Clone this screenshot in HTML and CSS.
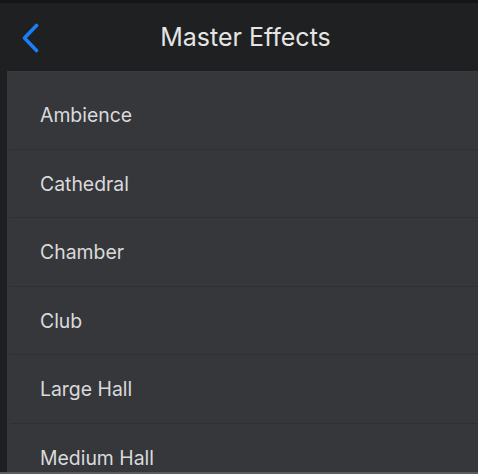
FILE: index.html
```html
<!DOCTYPE html>
<html lang="en">
<head>
    <meta charset="UTF-8">
    <meta name="viewport" content="width=device-width, initial-scale=1.0">
    <title>Master Effects</title>
    <link rel="stylesheet" href="styles.css">
</head>
<body>
    <div class="screen">
        <div class="nav-bar">
            <button class="back-btn" aria-label="Back">
                <svg width="20" height="30" viewBox="0 0 20 30">
                    <path d="M16.5 2.5 L4.5 15 L16.5 27.5" fill="none" stroke="#1b7ef6" stroke-width="3.6" stroke-linecap="round" stroke-linejoin="round"/>
                </svg>
            </button>
            <div class="nav-title">Master Effects</div>
        </div>
        <div class="content">
            <ul class="effect-list">
                <li class="effect-row">Ambience</li>
                <li class="effect-row">Cathedral</li>
                <li class="effect-row">Chamber</li>
                <li class="effect-row">Club</li>
                <li class="effect-row">Large Hall</li>
                <li class="effect-row">Medium Hall</li>
            </ul>
        </div>
    </div>
</body>
</html>
```

FILE: styles.css
```css
html, body {
    margin: 0;
    padding: 0;
    background-color: #1e1f21;
    font-family: "Inter", "Roboto", "Liberation Sans", sans-serif;
}
.screen {
    width: 478px;
    height: 474px;
    display: flex;
    flex-direction: column;
    overflow: hidden;
    border-bottom: 2px solid #5a5b5e;
    box-sizing: border-box;
}
.nav-bar {
    position: relative;
    height: 71px;
    flex-shrink: 0;
    display: flex;
    align-items: center;
    justify-content: center;
    background-color: #1f2022;
    border-top: 3px solid #141517;
    box-sizing: border-box;
}
.back-btn {
    position: absolute;
    left: 20px;
    top: 20px;
    padding: 0;
    border: none;
    background: none;
    cursor: pointer;
}
.nav-title {
    color: #e4e4e5;
    font-size: 25px;
    font-weight: 400;
    margin-left: 13px;
}
.content {
    flex: 1;
    margin-left: 7px;
    background-color: #36373b;
    padding-top: 9px;
    border-top: 1px solid #3a3b3f;
}
.effect-list {
    list-style: none;
    margin: 0;
    padding: 0;
}
.effect-row {
    height: 68.5px;
    box-sizing: border-box;
    display: flex;
    align-items: center;
    padding-left: 33px;
    color: #dadadb;
    font-size: 19.4px;
    background-image: linear-gradient(#2f3034, #2f3034);
    background-size: calc(100% - 3px) 1px;
    background-position: 3px 100%;
    background-repeat: no-repeat;
}
```
